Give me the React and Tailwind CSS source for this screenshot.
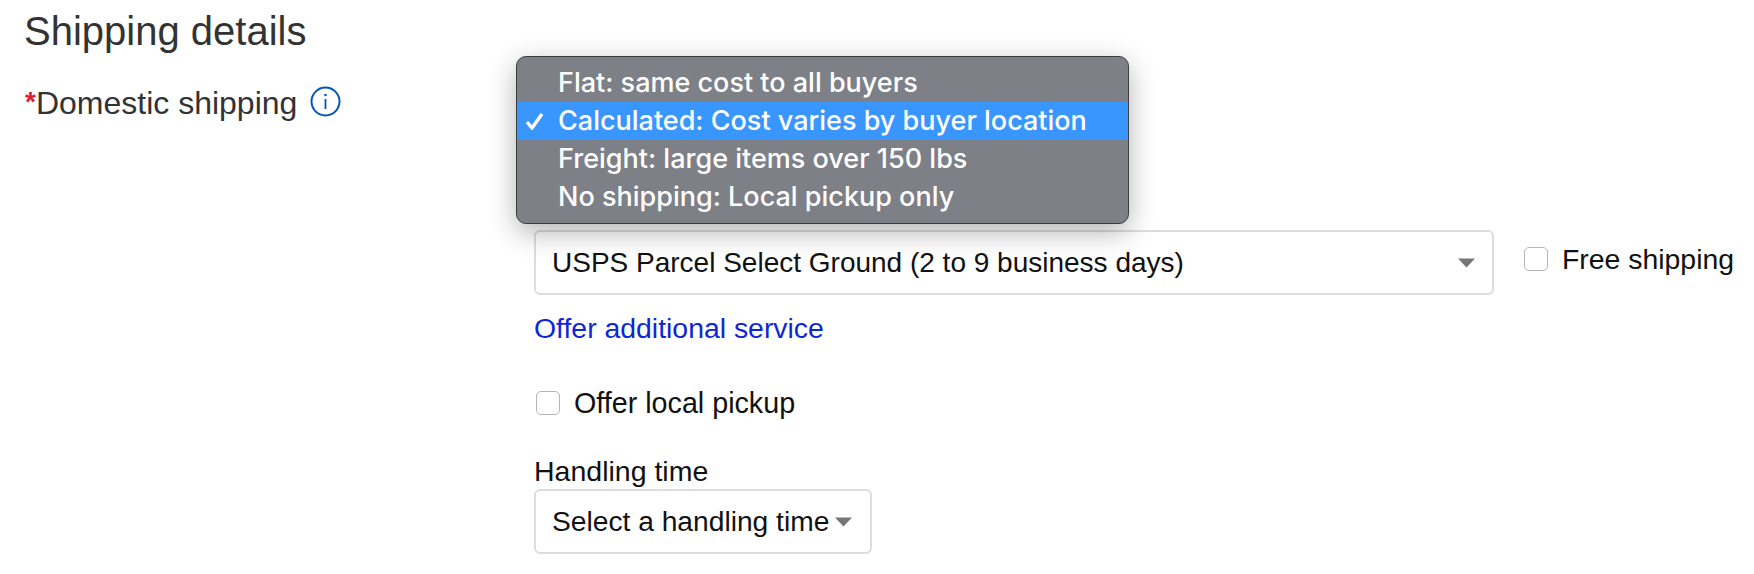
import React from 'react';

const menuItems = [
	{ label: 'Flat: same cost to all buyers' },
	{ label: 'Calculated: Cost varies by buyer location', selected: true },
	{ label: 'Freight: large items over 150 lbs' },
	{ label: 'No shipping: Local pickup only' },
];

function Caret() {
	return (
		<svg width="17" height="10" viewBox="0 0 17 10" className="shrink-0">
			<path d="M0 0.5H17L8.5 9.5Z" fill="#767676" />
		</svg>
	);
}

function InfoIcon() {
	return (
		<svg width="31" height="31" viewBox="0 0 31 31" fill="none">
			<circle cx="15.5" cy="15.5" r="14" stroke="#0654ba" strokeWidth="2" />
			<circle cx="15.5" cy="9" r="1.3" fill="#0654ba" />
			<path d="M15.5 13V23" stroke="#0654ba" strokeWidth="1.8" />
		</svg>
	);
}

function CheckRow({ label, className }) {
	return (
		<label className={`flex items-center gap-[14px] leading-[32px] text-[#111] ${className}`}>
			<input type="checkbox" className="w-[24px] h-[24px] appearance-none rounded-[5px] border border-[#b5b5b5] bg-white" />
			{label}
		</label>
	);
}

function ShippingMenu() {
	return (
		<div className="absolute left-[-18px] top-[-30px] w-[613px] h-[168px] z-10 pt-[7px] rounded-[10px] bg-[#7d8087] border border-[#3c3c3c] shadow-[0_8px_28px_rgba(0,0,0,0.3)] font-['Inter',sans-serif] font-medium text-[27px] text-white">
			{menuItems.map((item) => (
				<div key={item.label} className={`relative h-[38px] pl-[41px] leading-[38px] whitespace-nowrap ${item.selected ? 'bg-[#3a96ff]' : ''}`}>
					{item.selected && (
						<svg width="20" height="18" viewBox="0 0 20 18" fill="none" className="absolute left-[8px] top-[10px]">
							<path d="M2 10L7 16L17 2" stroke="white" strokeWidth="3.4" />
						</svg>
					)}
					{item.label}
				</div>
			))}
		</div>
	);
}

export default function App() {
	return (
		<div className="w-[1754px] h-[574px] bg-white overflow-hidden font-['Liberation_Sans',sans-serif]">
			<h2 className="pl-[24px] pt-[8px] text-[40px] leading-[46px] text-[#333]">Shipping details</h2>
			<div className="flex mt-[32px]">
				<div className="w-[534px] shrink-0 pl-[25px] flex items-start">
					<span className="text-[#dd1e31] text-[28px] leading-[32px] font-bold">*</span>
					<span className="-mt-[1px] text-[32px] leading-[36px] text-[#333]">Domestic shipping</span>
					<span className="ml-[13px]"><InfoIcon /></span>
				</div>
				<div className="relative flex flex-col items-start pt-[144px]">
					<ShippingMenu />
					<div className="flex items-center">
						<button className="w-[960px] h-[65px] flex items-center justify-between pl-[16px] pr-[17px] rounded-[6px] border-2 border-[#ddd] text-[28px] text-[#111]">
							USPS Parcel Select Ground (2 to 9 business days)
							<Caret />
						</button>
						<CheckRow label="Free shipping" className="ml-[30px] mb-[8px] text-[28.4px]" />
					</div>
					<a className="mt-[16px] text-[28.4px] leading-[34px] text-[#0f26d6]">Offer additional service</a>
					<CheckRow label="Offer local pickup" className="mt-[42px] ml-[2px] text-[28.7px]" />
					<div className="mt-[36px] text-[28.5px] leading-[32px] text-[#111]">Handling time</div>
					<button className="mt-[2px] w-[338px] h-[65px] flex items-center gap-[6px] pl-[16px] rounded-[6px] border-2 border-[#ddd] text-[28.2px] text-[#111]">
						Select a handling time
						<Caret />
					</button>
				</div>
			</div>
		</div>
	);
}
